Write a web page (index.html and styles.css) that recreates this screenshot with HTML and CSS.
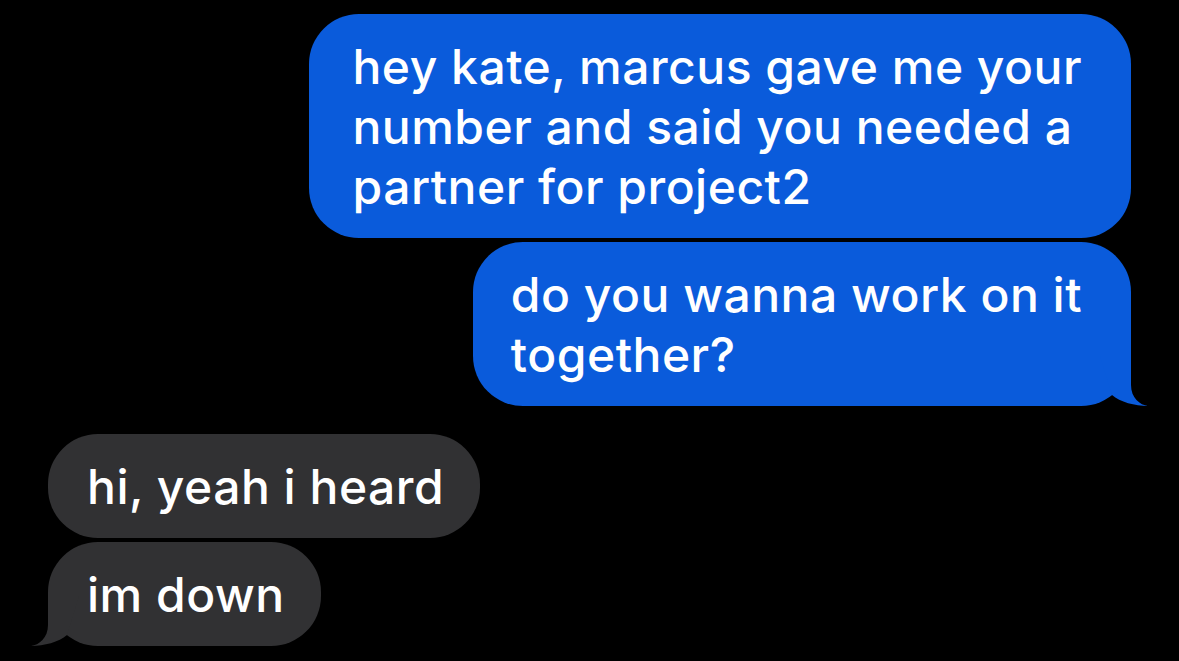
FILE: index.html
```html
<!DOCTYPE html>
<html lang="en">
<head>
<meta charset="utf-8">
<title>Messages</title>
<link rel="stylesheet" href="styles.css">
</head>
<body>
<main class="thread">
  <div class="bubble sent">hey kate, marcus gave me your<br>number and said you needed a<br>partner for project2</div>
  <div class="bubble sent tail">do you wanna work on it<br>together?<svg class="tail-shape" viewBox="0 0 48 50" aria-hidden="true"><path d="M31 0 L31 29 C31 42 40 49 48 50 C35 50 20 46 12 39 L0 0 Z"/></svg></div>
  <div class="bubble received first-received">hi, yeah i heard</div>
  <div class="bubble received tail">im down<svg class="tail-shape" viewBox="0 0 48 50" aria-hidden="true"><path d="M17 0 L17 29 C17 42 8 49 0 50 C13 50 28 46 36 39 L48 0 Z"/></svg></div>
</main>
</body>
</html>
```

FILE: styles.css
```css
html, body {
  margin: 0;
  background: #000;
}

.thread {
  display: flex;
  flex-direction: column;
  gap: 4px;
  padding: 14px 48px 0;
  font-family: Inter, "Noto Sans", sans-serif;
  font-size: 48px;
  font-weight: 550;
  letter-spacing: 0.5px;
  line-height: 60px;
  color: #fff;
}

.bubble {
  position: relative;
  width: fit-content;
  white-space: nowrap;
  border-radius: 50px;
  padding: 23px 38px 21px;
  box-sizing: border-box;
}

.sent {
  align-self: flex-end;
  background: #0a5bdb;
  padding-right: 49px;
}

.sent:first-child {
  padding-left: 43px;
}

.received {
  align-self: flex-start;
  background: #313133;
  padding-left: 39px;
  padding-right: 36px;
}

.first-received {
  margin-top: 24px;
}

.tail-shape {
  position: absolute;
  bottom: 0;
  width: 48px;
  height: 50px;
}

.sent .tail-shape {
  right: -17px;
  fill: #0a5bdb;
}

.received .tail-shape {
  left: -17px;
  fill: #313133;
}
```
